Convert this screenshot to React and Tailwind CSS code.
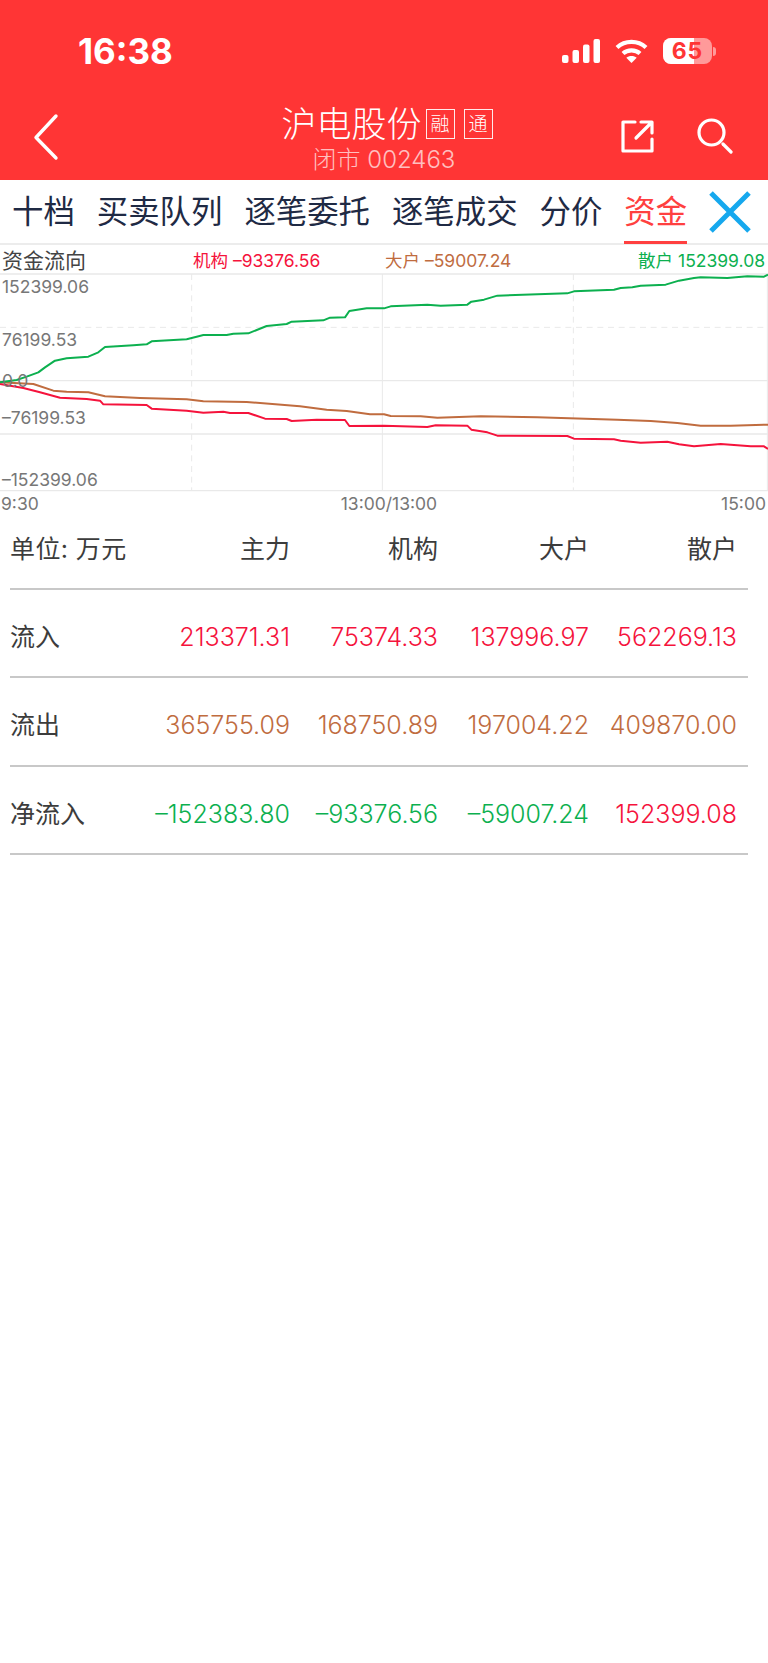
import React from "react";

const SANS = "font-['Inter','Noto_Sans_CJK_SC',sans-serif]";

// chart points, read off at 3x: [x, y] with y 100 = top of the plot
const SHIFT = 1152;
const shift = (pts) => pts.map(([x, y]) => [x + SHIFT, y]);
const GREEN_LINE = [
    [0, 425], [50, 418], [80, 408], [115, 395], [135, 380], [165, 360], [200, 353], [265, 348], [295, 335], [315, 319],
    [400, 314], [440, 311], [455, 302], [560, 296], [590, 288], [610, 283], [680, 283], [700, 279], [745, 278],
    [800, 256], [860, 250], [875, 243], [970, 239], [990, 231], [1035, 230], [1048, 211], [1100, 203],
    ...shift([
        [0, 203], [20, 197], [130, 192], [170, 195], [250, 192], [262, 183], [300, 177], [340, 165], [550, 158],
        [570, 152], [690, 147], [710, 142], [745, 140], [770, 135], [845, 132], [885, 120], [930, 112], [950, 110],
        [1030, 112], [1090, 107], [1140, 108], [1152, 102],
    ]),
];
const BROWN_LINE = [
    [0, 425], [100, 430], [160, 450], [200, 453], [265, 455], [315, 467], [420, 472], [560, 476], [610, 482],
    [740, 484], [900, 497], [980, 507], [1040, 511], [1110, 521],
    ...shift([
        [0, 521], [20, 526], [110, 527], [160, 531], [290, 527], [460, 530], [700, 537], [800, 541], [880, 547],
        [950, 555], [1040, 555], [1152, 552],
    ]),
];
const RED_LINE = [
    [0, 430], [70, 442], [120, 455], [180, 471], [260, 475], [300, 480], [310, 491], [440, 493], [455, 504],
    [560, 510], [610, 516], [670, 513], [690, 517], [745, 517], [795, 534], [860, 535], [875, 541], [950, 537],
    [1035, 538], [1048, 556],
    ...shift([
        [0, 555], [130, 559], [155, 554], [250, 555], [262, 567], [310, 575], [340, 585], [550, 586], [570, 594],
        [690, 596], [710, 600], [770, 606], [850, 603], [885, 611], [930, 617], [1010, 610], [1100, 617], [1140, 617],
        [1152, 625],
    ]),
];

const TABS = ["十档", "买卖队列", "逐笔委托", "逐笔成交", "分价"];

const RED = "text-[#f5133c]";
const BROWN = "text-[#c06c3f]";
const GREEN = "text-[#0cb04f]";

const ROWS = [
    { label: "流入", cells: [["213371.31", RED], ["75374.33", RED], ["137996.97", RED], ["562269.13", RED]] },
    { label: "流出", cells: [["365755.09", BROWN], ["168750.89", BROWN], ["197004.22", BROWN], ["409870.00", BROWN]] },
    { label: "净流入", cells: [["–152383.80", GREEN], ["–93376.56", GREEN], ["–59007.24", GREEN], ["152399.08", RED]] },
];

const COL_WIDTHS = ["w-[170px]", "w-[148px]", "w-[151px]", "w-[148px]"];

const StatusIcons = () => (
    <div className="flex items-center">
        <svg width="38" height="24" viewBox="0 0 38 24" fill="white">
            <rect x="0" y="16" width="6.5" height="8" rx="2" />
            <rect x="10.5" y="11" width="6.5" height="13" rx="2" />
            <rect x="21" y="5.5" width="6.5" height="18.5" rx="2" />
            <rect x="31.5" y="0" width="6.5" height="24" rx="2" />
        </svg>
        <svg className="ml-[15px]" width="33" height="24" viewBox="0 0 33 24" fill="none" stroke="white" strokeWidth="4.2">
            <path d="M2 8.5C10 1 23 1 31 8.5" />
            <path d="M8 14.5C12.5 10.3 20.5 10.3 25 14.5" />
            <path d="M16.5 24L11.3 18.8C14 16.3 19 16.3 21.7 18.8Z" fill="white" stroke="none" />
        </svg>
        <div className="relative ml-[15px] h-[26px] w-[49px] overflow-hidden rounded-[8px] bg-white/50">
            <div className="h-full w-[31px] bg-white"></div>
            <span className="absolute inset-0 flex items-center justify-center font-['Inter',sans-serif] text-[23px] font-bold leading-none tracking-[1px] text-[#ff3535]">
                65
            </span>
        </div>
        <div className="ml-[1px] h-[9px] w-[3px] rounded-r-full bg-white/50"></div>
    </div>
);

const Badge = ({ children, className }) => (
    <span className={`flex h-[30px] w-[29px] items-center justify-center border-[1.5px] border-white/90 text-[19px] font-light leading-none text-white ${className}`}>
        {children}
    </span>
);

const FlowChart = () => {
    const poly = (pts) => pts.map((p) => p.join(",")).join(" ");
    const grid = "#e9e9e9";
    return (
        <svg className="block w-full" height="219" viewBox="0 97 2304 657" preserveAspectRatio="none" fill="none">
            <path d="M0 100H2304M0 420H2304M0 580H2304M0 750H2304" stroke={grid} strokeWidth="4" />
            <path d="M0 260H2304" stroke={grid} strokeWidth="3" strokeDasharray="18 14" />
            <path d="M1147 100V750" stroke={grid} strokeWidth="3" />
            <path d="M575 100V750M1720 100V750" stroke={grid} strokeWidth="3" strokeDasharray="18 14" />
            <path d="M2302 100V750" stroke={grid} strokeWidth="3" />
            <polyline points={poly(BROWN_LINE)} stroke="#c06c3f" strokeWidth="6" strokeLinejoin="round" />
            <polyline points={poly(RED_LINE)} stroke="#f5133c" strokeWidth="6" strokeLinejoin="round" />
            <polyline points={poly(GREEN_LINE)} stroke="#0cb04f" strokeWidth="6" strokeLinejoin="round" />
        </svg>
    );
};

const ChartLabel = ({ top, children }) => (
    <span className="absolute left-[2px] text-[17.5px] leading-[20px] text-[#777777]" style={{ top }}>
        {children}
    </span>
);

const App = () => {
    return (
        <div className={`min-h-screen bg-white ${SANS}`}>
            {/* red header */}
            <div className="h-[180px] bg-[#ff3535] text-white">
                <div className="flex h-[96px] items-start justify-between pl-[78px] pr-[52px] pt-[32px]">
                    <span className="font-['Inter',sans-serif] text-[35px] font-bold leading-[38px]">16:38</span>
                    <div className="pt-[6px]">
                        <StatusIcons />
                    </div>
                </div>
                <div className="relative flex h-[84px] flex-col items-center pt-[5px]">
                    <div className="flex items-center pl-[6px]">
                        <span className="text-[35px] font-light leading-[46px]">沪电股份</span>
                        <Badge className="ml-[4px]">融</Badge>
                        <Badge className="ml-[9px]">通</Badge>
                    </div>
                    <span className="-mt-[3px] text-[24px] font-light leading-[32px] text-white/70">闭市 002463</span>
                    <svg className="absolute left-[32px] top-[17px]" width="28" height="48" viewBox="0 0 28 48" fill="none" stroke="white" strokeWidth="3.4" strokeLinecap="round" strokeLinejoin="round">
                        <path d="M24 3L4 24.5L24 45" />
                    </svg>
                    <svg className="absolute left-[621px] top-[24px]" width="33" height="33" viewBox="0 0 33 33" fill="none" stroke="white" strokeWidth="3.2" strokeLinecap="round" strokeLinejoin="round">
                        <path d="M14 2H2V31H31V19" />
                        <path d="M15 18L30 3M20 2H31V13" />
                    </svg>
                    <svg className="absolute left-[697px] top-[22px]" width="36" height="36" viewBox="0 0 36 36" fill="none" stroke="white" strokeWidth="3.2" strokeLinecap="round">
                        <circle cx="14.5" cy="14.5" r="12.5" />
                        <path d="M26 26L34 34" />
                    </svg>
                </div>
            </div>

            {/* tabs */}
            <div className="flex h-[65px] items-center border-b-[2px] border-[#ececec] pl-[12px] text-[31.4px] font-normal text-[#1f2a44]">
                <div className="flex items-center gap-[22px] leading-[42px]">
                    {TABS.map((tab) => (
                        <span key={tab} className="whitespace-nowrap">{tab}</span>
                    ))}
                    <span className="relative whitespace-nowrap text-[#ff4040]">
                        资金
                        <span className="absolute inset-x-0 -bottom-[11px] h-[3px] bg-[#ff4040]"></span>
                    </span>
                </div>
                <svg className="ml-[22px]" width="42" height="42" viewBox="0 0 42 42" fill="none" stroke="#16a8ee" strokeWidth="5">
                    <path d="M2 2L40 40M40 2L2 40" />
                </svg>
            </div>

            {/* chart */}
            <div className="flex h-[28px] items-center pr-[3px] pt-[3px] text-[17.5px] leading-none">
                <span className="w-[193px] pl-[2px] text-[21px] text-[#444444]">资金流向</span>
                <span className={`w-[192px] whitespace-nowrap ${RED}`}>机构 –93376.56</span>
                <span className={`whitespace-nowrap ${BROWN}`}>大户 –59007.24</span>
                <span className={`ml-auto whitespace-nowrap ${GREEN}`}>散户 152399.08</span>
            </div>
            <div className="relative">
                <FlowChart />
                <ChartLabel top={4}>152399.06</ChartLabel>
                <ChartLabel top={57}>76199.53</ChartLabel>
                <ChartLabel top={98}>0.0</ChartLabel>
                <ChartLabel top={135}>–76199.53</ChartLabel>
                <ChartLabel top={197}>–152399.06</ChartLabel>
            </div>
            <div className="relative flex h-[24px] items-center justify-between pl-[1px] pr-[2px] text-[17.5px] leading-none text-[#777777]">
                <span>9:30</span>
                <span className="pl-[18px]">13:00/13:00</span>
                <span>15:00</span>
            </div>

            {/* table */}
            <div className="ml-[10px] w-[738px] text-[25px]">
                <div className="flex h-[73.5px] items-center border-b-[2px] border-[#c8c8c8] pb-[5px] text-[#3c3c3c]">
                    <span className="w-[110px] whitespace-nowrap tracking-[0.4px]">单位: 万元</span>
                    {["主力", "机构", "大户", "散户"].map((head, i) => (
                        <span key={head} className={`${COL_WIDTHS[i]} text-right`}>{head}</span>
                    ))}
                </div>
                {ROWS.map((row) => (
                    <div key={row.label} className="flex h-[88.5px] items-center border-b-[2px] border-[#c8c8c8] pt-[9px]">
                        <span className="w-[110px] text-[#3c3c3c]">{row.label}</span>
                        {row.cells.map(([value, color], i) => (
                            <span key={i} className={`${COL_WIDTHS[i]} text-right text-[25px] font-light ${color}`}>
                                {value}
                            </span>
                        ))}
                    </div>
                ))}
            </div>
        </div>
    );
};

export default App;
